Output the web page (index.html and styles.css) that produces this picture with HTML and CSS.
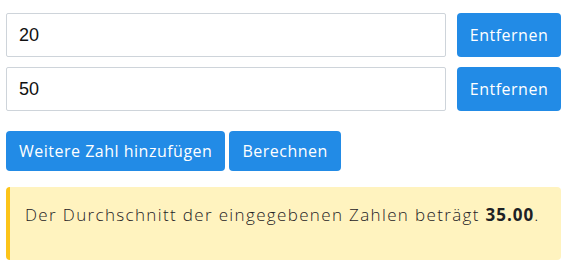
FILE: index.html
```html
<!DOCTYPE html>
<html lang="de">
<head>
<meta charset="utf-8">
<title>Durchschnitt</title>
<link rel="stylesheet" href="styles.css">
</head>
<body>
<main class="page">
  <div class="rows">
    <div class="row">
      <input class="num" type="text" value="20">
      <button class="btn btn-remove">Entfernen</button>
    </div>
    <div class="row">
      <input class="num" type="text" value="50">
      <button class="btn btn-remove">Entfernen</button>
    </div>
  </div>
  <div class="actions">
    <button class="btn btn-action">Weitere Zahl hinzufügen</button>
    <button class="btn btn-action">Berechnen</button>
  </div>
  <div class="alert">
    <p>Der Durchschnitt der eingegebenen Zahlen beträgt <strong>35.00</strong>.</p>
  </div>
</main>
</body>
</html>
```

FILE: styles.css
```css
* { box-sizing: border-box; }
html, body { margin: 0; background: #fff; }
body {
  font-family: "Open Sans", "Noto Sans", sans-serif;
  color: #212529;
}
.page {
  padding: 13px 8px 0 6px;
}
.rows {
  display: flex;
  flex-direction: column;
  gap: 10px;
}
.row {
  display: flex;
  gap: 11px;
}
.num {
  flex: 1;
  height: 44px;
  border: 1px solid #ced4da;
  border-radius: 2px;
  padding: 0 12px;
  font-family: "Liberation Sans", Arial, sans-serif;
  font-size: 18px;
  color: #111;
  outline: none;
}
.btn {
  border: none;
  background: #228be6;
  color: #fff;
  border-radius: 4px;
  font-family: "Open Sans", "Noto Sans", sans-serif;
  font-size: 16px;
  letter-spacing: 0.5px;
  cursor: pointer;
}
.btn-remove {
  width: 104px;
  height: 44px;
  padding: 0;
}
.actions {
  display: flex;
  gap: 4px;
  margin-top: 20px;
}
.btn-action {
  height: 40px;
  padding: 0 13px;
}
.alert {
  margin-top: 16px;
  background: #fff3bf;
  border-left: 4px solid #fcc419;
  border-radius: 4px;
  padding: 15px 15px;
  height: 73px;
}
.alert p {
  margin: 0;
  font-size: 17px;
  font-weight: 300;
  letter-spacing: 1.35px;
  line-height: 26px;
  color: #1d2125;
}
.alert strong { font-weight: 700; letter-spacing: 1px; }
```
